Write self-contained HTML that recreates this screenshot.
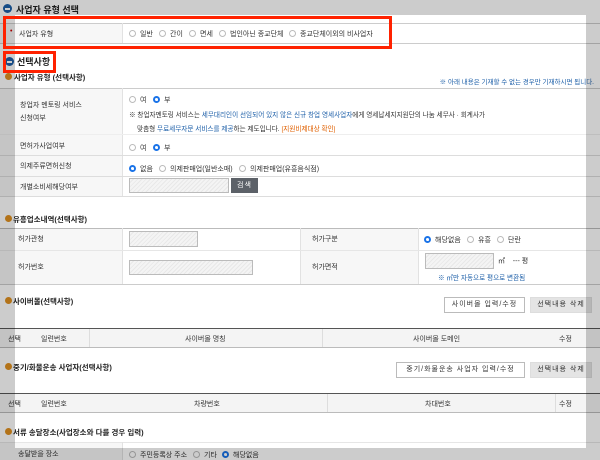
<!DOCTYPE html>
<html><head><meta charset="utf-8">
<style>
*{margin:0;padding:0;box-sizing:border-box}
body{width:600px;height:460px;overflow:hidden;background:#fff;position:relative;font-family:"Liberation Sans","Noto Sans CJK KR",sans-serif;font-size:7px;color:#333}
.a{position:absolute;white-space:nowrap}
.h1{font-size:9px;font-weight:bold;color:#222}
.h2{font-size:7.5px;font-weight:bold;color:#222}
.bi{position:absolute;width:9px;height:9px;border-radius:50%;background:#1d5fa8}
.bi:after{content:"";position:absolute;left:2px;top:4px;width:5px;height:1.5px;background:#fff}
.oi{position:absolute;width:7px;height:7px;border-radius:50%;background:#e09020}
.hl{position:absolute;left:0;right:0;height:1px;background:#ddd}
.lab{position:absolute;left:0;width:122px;background:#f7f7f7}
.vl{position:absolute;width:1px;background:#e2e2e2}
.r{position:absolute;width:7px;height:7px;border-radius:50%;border:1px solid #bbb;background:#fff}
.r.on{border:2px solid #1a73e8}
.r.on:after{content:"";position:absolute;left:0.5px;top:0.5px;width:2px;height:2px;border-radius:50%;background:#fff}
.inp{position:absolute;border:1px solid #bbb;background:repeating-linear-gradient(135deg,#f4f4f4 0 2px,#e8e8e8 2px 3px)}
.btn{position:absolute;border:1px solid #bbb;background:#fff;font-size:7px;text-align:center;line-height:14px;letter-spacing:1px}
.btn.g{background:#e4e4e4;border-color:#ddd}
.blue{color:#1d5fa8}.org{color:#e06000}
.th{position:absolute;left:0;right:0;background:#f4f4f4;border-top:1.5px solid #555;border-bottom:1.5px solid #bbb}
.ov{position:absolute;background:rgba(0,0,0,0.2)}
.red{position:absolute;border:3px solid #ff2200}
</style></head><body>

<div class="bi" style="left:3px;top:4px"></div>
<div class="a h1" style="left:16px;top:3px">사업자 유형 선택</div>
<div class="lab" style="top:23px;height:20px"></div>
<div class="hl" style="top:23px;background:#ccc"></div>
<div class="hl" style="top:43px;background:#ccc"></div>
<div class="vl" style="left:122px;top:23px;height:20px"></div>
<div class="a" style="left:10px;top:28px;color:#c00">•</div>
<div class="a" style="left:19px;top:29px">사업자 유형</div>
<div class="r" style="left:129px;top:30px"></div><div class="a" style="left:140px;top:29px">일반</div>
<div class="r" style="left:159px;top:30px"></div><div class="a" style="left:170px;top:29px">간이</div>
<div class="r" style="left:189px;top:30px"></div><div class="a" style="left:200px;top:29px">면세</div>
<div class="r" style="left:219px;top:30px"></div><div class="a" style="left:230px;top:29px">법인아닌 종교단체</div>
<div class="r" style="left:289px;top:30px"></div><div class="a" style="left:300px;top:29px">종교단체이외의 비사업자</div>

<div class="bi" style="left:5px;top:57px"></div>
<div class="a h1" style="left:17px;top:55px">선택사항</div>

<div class="oi" style="left:5px;top:73px"></div>
<div class="a h2" style="left:14px;top:72px">사업자 유형 (선택사항)</div>
<div class="a blue" style="right:6px;top:76px;font-size:6.5px">※ 아래 내용은 기재할 수 없는 경우만 기재하시면 됩니다.</div>

<div class="lab" style="top:88px;height:108px"></div>
<div class="hl" style="top:88px;background:#ccc"></div>
<div class="vl" style="left:122px;top:88px;height:108px"></div>
<div class="a" style="left:20px;top:100px">창업자 멘토링 서비스</div>
<div class="a" style="left:20px;top:113px">신청여부</div>
<div class="r" style="left:129px;top:96px"></div><div class="a" style="left:140px;top:95px">여</div>
<div class="r on" style="left:153px;top:96px"></div><div class="a" style="left:164px;top:95px">부</div>
<div class="a" style="left:129px;top:109px;font-size:6.6px">※ 창업자멘토링 서비스는 <span class="blue">세무대리인이 선임되어 있지 않은 신규 창업 영세사업자</span>에게 영세납세지지원단의 나눔 세무사 · 회계사가</div>
<div class="a" style="left:137px;top:123px;font-size:6.6px">맞춤형 <span class="blue">무료세무자문 서비스를 제공</span>하는 제도입니다. <span class="org">[지원비제대상 확인]</span></div>
<div class="hl" style="top:134px;background:#eee"></div>
<div class="a" style="left:20px;top:141px">면허가사업여부</div>
<div class="r" style="left:129px;top:144px"></div><div class="a" style="left:140px;top:143px">여</div>
<div class="r on" style="left:153px;top:144px"></div><div class="a" style="left:164px;top:143px">부</div>
<div class="hl" style="top:155px"></div>
<div class="a" style="left:20px;top:161px">의제주류면허신청</div>
<div class="r on" style="left:129px;top:165px"></div><div class="a" style="left:140px;top:164px">없음</div>
<div class="r" style="left:159px;top:165px"></div><div class="a" style="left:170px;top:164px">의제판매업(일반소매)</div>
<div class="r" style="left:239px;top:165px"></div><div class="a" style="left:250px;top:164px">의제판매업(유흥음식점)</div>
<div class="hl" style="top:176px"></div>
<div class="a" style="left:20px;top:182px">개별소비세해당여부</div>
<div class="inp" style="left:129px;top:178px;width:100px;height:15px"></div>
<div class="a" style="left:231px;top:178px;width:27px;height:15px;background:#5c6168;color:#fff;text-align:center;line-height:15px;font-size:7px;letter-spacing:1px">검색</div>
<div class="hl" style="top:196px"></div>

<div class="oi" style="left:5px;top:215px"></div>
<div class="a h2" style="left:13px;top:214px">유흥업소내역(선택사항)</div>
<div class="lab" style="top:228px;height:56px"></div>
<div class="a" style="left:300px;top:228px;width:118px;height:56px;background:#f7f7f7"></div>
<div class="hl" style="top:228px;background:#bbb"></div>
<div class="vl" style="left:122px;top:228px;height:56px"></div>
<div class="vl" style="left:300px;top:228px;height:56px"></div>
<div class="vl" style="left:418px;top:228px;height:56px"></div>
<div class="a" style="left:18px;top:234px">허가관청</div>
<div class="inp" style="left:129px;top:231px;width:69px;height:16px"></div>
<div class="a" style="left:312px;top:234px">허가구분</div>
<div class="r on" style="left:424px;top:236px"></div><div class="a" style="left:435px;top:235px">해당없음</div>
<div class="r" style="left:467px;top:236px"></div><div class="a" style="left:478px;top:235px">유흥</div>
<div class="r" style="left:497px;top:236px"></div><div class="a" style="left:508px;top:235px">단란</div>
<div class="hl" style="top:250px;background:#e6e6e6"></div>
<div class="a" style="left:18px;top:262px">허가번호</div>
<div class="inp" style="left:129px;top:260px;width:124px;height:15px"></div>
<div class="a" style="left:312px;top:262px">허가면적</div>
<div class="inp" style="left:425px;top:253px;width:69px;height:16px"></div>
<div class="a" style="left:498px;top:256px">㎡ &nbsp;&nbsp; --- 평</div>
<div class="a blue" style="left:438px;top:272px;font-size:6.6px">※ ㎡만 자동으로 평으로 변환됨</div>
<div class="hl" style="top:284px;background:#ccc"></div>

<div class="oi" style="left:5px;top:297px"></div>
<div class="a h2" style="left:13px;top:296px">사이버몰(선택사항)</div>
<div class="btn" style="left:444px;top:297px;width:81px;height:16px">사이버몰 입력/수정</div>
<div class="btn g" style="left:530px;top:297px;width:62px;height:16px">선택내용 삭제</div>
<div class="th" style="top:328px;height:20px"></div>
<div class="vl" style="left:89px;top:329px;height:18px;background:#ddd"></div>
<div class="vl" style="left:322px;top:329px;height:18px;background:#ddd"></div>
<div class="a" style="left:8px;top:334px">선택</div>
<div class="a" style="left:41px;top:334px">일련번호</div>
<div class="a" style="left:185px;top:334px">사이버몰 명칭</div>
<div class="a" style="left:413px;top:334px">사이버몰 도메인</div>
<div class="a" style="left:559px;top:334px">수정</div>

<div class="oi" style="left:5px;top:363px"></div>
<div class="a h2" style="left:13px;top:362px">중기/화물운송 사업자(선택사항)</div>
<div class="btn" style="left:396px;top:362px;width:129px;height:16px">중기/화물운송 사업자 입력/수정</div>
<div class="btn g" style="left:530px;top:362px;width:62px;height:16px">선택내용 삭제</div>
<div class="th" style="top:393px;height:20px"></div>
<div class="vl" style="left:327px;top:394px;height:18px;background:#ddd"></div>
<div class="vl" style="left:555px;top:394px;height:18px;background:#ddd"></div>
<div class="a" style="left:8px;top:399px">선택</div>
<div class="a" style="left:41px;top:399px">일련번호</div>
<div class="a" style="left:194px;top:399px">차량번호</div>
<div class="a" style="left:425px;top:399px">차대번호</div>
<div class="a" style="left:559px;top:399px">수정</div>

<div class="oi" style="left:5px;top:428px"></div>
<div class="a h2" style="left:13px;top:427px">서류 송달장소(사업장소와 다를 경우 입력)</div>
<div class="lab" style="top:442px;height:18px"></div>
<div class="hl" style="top:442px;background:#e6e6e6"></div>
<div class="vl" style="left:122px;top:442px;height:18px"></div>
<div class="a" style="left:18px;top:449px">송달받을 장소</div>
<div class="r" style="left:129px;top:451px"></div><div class="a" style="left:140px;top:450px">주민등록상 주소</div>
<div class="r" style="left:193px;top:451px"></div><div class="a" style="left:204px;top:450px">기타</div>
<div class="r on" style="left:222px;top:451px"></div><div class="a" style="left:233px;top:450px">해당없음</div>

<div class="ov" style="left:0;top:0;width:600px;height:15px"></div>
<div class="ov" style="left:0;top:15px;width:15px;height:433px"></div>
<div class="ov" style="left:586px;top:15px;width:14px;height:433px"></div>
<div class="ov" style="left:0;top:448px;width:600px;height:12px"></div>

<div class="red" style="left:3px;top:16px;width:389px;height:33px"></div>
<div class="red" style="left:3px;top:51px;width:53px;height:22px"></div>
</body></html>
